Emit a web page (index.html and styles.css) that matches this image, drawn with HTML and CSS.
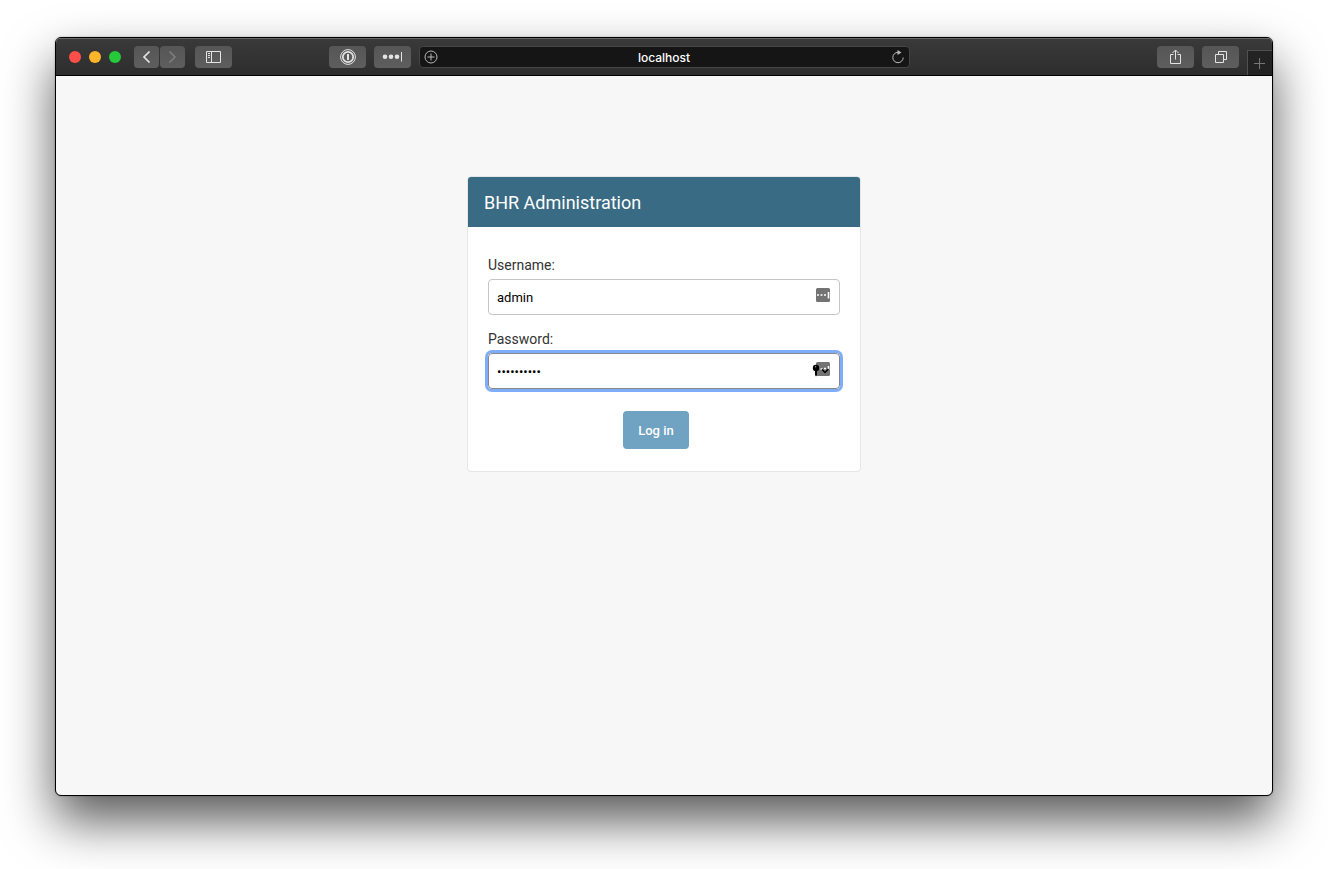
FILE: index.html
```
<!DOCTYPE html>
<html lang="en">
<head>
    <meta charset="UTF-8">
    <meta name="viewport" content="width=device-width, initial-scale=1.0">
    <title>Log in | BHR Administration</title>
    <link rel="stylesheet" href="styles.css">
</head>
<body>
    <div class="window">
        <header class="toolbar">
            <div class="toolbar-left">
                <div class="lights">
                    <button type="button" class="light close" aria-label="Close"></button>
                    <button type="button" class="light minimize" aria-label="Minimize"></button>
                    <button type="button" class="light zoom" aria-label="Zoom"></button>
                </div>
                <div class="history">
                    <button type="button" class="tool small" aria-label="Back">
                        <svg width="25" height="22" viewBox="0 0 25 22"><path d="M15.5 5.5 10 11l5.5 5.5" stroke-width="1.7"/></svg>
                    </button>
                    <button type="button" class="tool small" aria-label="Forward" disabled>
                        <svg width="25" height="22" viewBox="0 0 25 22"><path d="M9.5 5.5 15 11l-5.5 5.5" stroke-width="1.3"/></svg>
                    </button>
                </div>
                <button type="button" class="tool" aria-label="Show sidebar">
                    <svg width="37" height="22" viewBox="0 0 37 22"><path d="M11.5 5.5h14v11h-14zM16.5 5.5v11M13 7.5h2M13 9.5h2M13 11.5h2"/></svg>
                </button>
                <div class="extensions">
                    <button type="button" class="tool" aria-label="1Password">
                        <svg width="37" height="22" viewBox="0 0 37 22"><circle cx="19" cy="11" r="7.4"/><circle cx="19" cy="11" r="5.2" stroke-width="1.7"/><path d="M19 8v6" stroke-width="2"/></svg>
                    </button>
                    <button type="button" class="tool" aria-label="LastPass">
                        <svg width="37" height="22" viewBox="0 0 37 22"><g class="solid"><circle cx="11" cy="10.7" r="2.3"/><circle cx="17" cy="10.7" r="2.3"/><circle cx="23" cy="10.7" r="2.3"/></g><path d="M27.5 6v9.5"/></svg>
                    </button>
                </div>
            </div>
            <div class="address">
                <button type="button" class="address-button" aria-label="Add bookmark">
                    <svg width="14" height="14" viewBox="0 0 14 14"><circle cx="7" cy="7" r="6"/><path d="M7 3.5v7M3.5 7h7"/></svg>
                </button>
                <input type="text" class="address-input" value="localhost" aria-label="Address">
                <button type="button" class="address-button" aria-label="Reload">
                    <svg width="14" height="14" viewBox="0 0 14 14"><path d="M7 2.3A5.2 5.2 0 1 0 12.2 7.500"/><path class="solid" d="M6.5 0v5l4-2.5z"/></svg>
                </button>
            </div>
            <div class="toolbar-right">
                <button type="button" class="tool" aria-label="Share">
                    <svg width="37" height="22" viewBox="0 0 37 22"><path d="M16.5 8.5h-3v9h10v-9h-3M18.5 13.5v-9M15.5 7l3-3 3 3"/></svg>
                </button>
                <button type="button" class="tool" aria-label="Show tabs">
                    <svg width="37" height="22" viewBox="0 0 37 22"><path d="M13.5 8.5h8v8h-8zM16.5 8.5v-3h8v8h-3"/></svg>
                </button>
                <button type="button" class="new-tab" aria-label="New tab">
                    <svg width="24" height="24" viewBox="0 0 24 24"><path d="M11.5 7v11M6 12.5h11"/></svg>
                </button>
            </div>
        </header>
        <main class="page">
            <div class="login">
                <div class="login-header">
                    <h1>BHR Administration</h1>
                </div>
                <form class="login-form">
                    <div class="form-row">
                        <label for="id_username">Username:</label>
                        <div class="field">
                            <input type="text" name="username" id="id_username" value="admin">
                            <svg class="field-icon" width="18" height="14" viewBox="0 0 18 14"><rect x="4" width="14" height="14" rx="1.5" fill="#737373"/><path d="M5 7h2M8.500 7h2M12 7h2M16.500 4v6.500" stroke="#fff" stroke-width="1.6"/></svg>
                        </div>
                    </div>
                    <div class="form-row">
                        <label for="id_password">Password:</label>
                        <div class="field active">
                            <input type="password" name="password" id="id_password" value="adminadmin">
                            <svg class="field-icon" width="18" height="14" viewBox="0 0 18 14"><rect x="4" width="14" height="14" rx="1.5" fill="#737373"/><path d="M8.5 7h2M12 6.5h2M16.5 4v4" stroke="#fff" stroke-width="1.6"/><circle cx="4" cy="6" r="3.2"/><path d="M3 8h2v5l-1 1.500-1-1.500z"/><circle cx="3.600" cy="4.700" r=".7" fill="#999"/><path d="M10 7.500l3 3 3.500-3.500" fill="none" stroke="#000" stroke-width="1.5"/></svg>
                        </div>
                    </div>
                    <div class="submit-row">
                        <button type="submit">Log in</button>
                    </div>
                </form>
            </div>
        </main>
    </div>
</body>
</html>
```
FILE: styles.css
```
* {
    box-sizing: border-box;
}
body {
    margin: 0;
    padding: 37px 55px 73px;
    min-height: 100vh;
    display: flex;
    background: #fff;
    font-family: Roboto, "Liberation Sans", sans-serif;
    font-size: 14px;
    color: #333;
}
button,
input {
    font-family: inherit;
    margin: 0;
}
button {
    padding: 0;
    border: none;
}
svg {
    display: block;
}
.window {
    flex: 1;
    display: flex;
    flex-direction: column;
    border: 1px solid #000;
    border-radius: 6px;
    overflow: hidden;
    background: #f7f7f7;
    box-shadow: 0 25px 50px rgba(0, 0, 0, 0.65), 0 0 2px rgba(0, 0, 0, 0.3);
}

/* Browser toolbar */
.toolbar {
    display: flex;
    align-items: center;
    height: 38px;
    border-bottom: 1px solid #000;
    background: linear-gradient(#3a3a3a, #2d2d2d);
    box-shadow: inset 0 1px 0 #686868;
}
.toolbar svg {
    flex: none;
    fill: none;
    stroke: #e4e4e4;
}
.toolbar .solid {
    fill: #e4e4e4;
    stroke: none;
}
.toolbar-left,
.toolbar-right {
    flex: 1;
    display: flex;
    align-items: center;
}
.lights {
    display: flex;
    gap: 8px;
    margin: 0 13px;
}
.light {
    width: 12px;
    height: 12px;
    border-radius: 50%;
}
.close {
    background: #ff4f48;
}
.minimize {
    background: #fdb62a;
}
.zoom {
    background: #26c93a;
}
.history {
    display: flex;
    gap: 1px;
    margin-right: 10px;
}
.tool {
    display: flex;
    justify-content: center;
    width: 37px;
    height: 22px;
    border-radius: 4px;
    background: linear-gradient(#565656, #5e5e5e);
}
.tool.small {
    width: 25px;
}
.tool:disabled svg {
    stroke: #858585;
}
.extensions {
    display: flex;
    gap: 8px;
    margin-left: auto;
    margin-right: 8px;
}
.address {
    flex: 0 1 491px;
    display: flex;
    align-items: center;
    height: 22px;
    padding: 0 4px;
    border: 1px solid #454545;
    border-radius: 4px;
    background: #151515;
}
.address-input {
    flex: 1;
    min-width: 0;
    padding: 1px 0 0;
    border: none;
    background: none;
    color: #fff;
    font-family: Inter, sans-serif;
    font-size: 12px;
    font-weight: 500;
    text-align: center;
}
.address-button {
    background: none;
}
.address-button svg {
    stroke: #b8b8b8;
}
.address-button .solid {
    fill: #b8b8b8;
}
.toolbar-right {
    align-self: stretch;
    justify-content: flex-end;
    gap: 8px;
}
.new-tab {
    align-self: flex-end;
    width: 25px;
    height: 25px;
    border: 1px solid #505050;
    border-width: 1px 0 0 1px;
    background: #232323;
}
.new-tab svg {
    stroke: #777;
}

/* Login box */
.page {
    flex: 1;
    padding: 100px 20px;
}
.login {
    max-width: 394px;
    margin: 0 auto;
    border: 1px solid #e6e6e6;
    border-radius: 4px;
    overflow: hidden;
    background: #fff;
}
.login-header {
    padding: 16px 16px 14px;
    background: #396b84;
}
.login-header h1 {
    margin: 0;
    color: #fff;
    font-size: 18px;
    font-weight: 400;
    line-height: 20px;
}
.login-form {
    padding: 28px 20px 22px;
}
.form-row {
    margin-bottom: 14px;
}
.form-row label {
    display: block;
    margin-bottom: 4px;
    line-height: 20px;
}
.field {
    display: flex;
    align-items: center;
    height: 36px;
    padding: 0 9px 0 8px;
    border: 1px solid #c4c4c4;
    border-radius: 4px;
}
.field.active {
    border-color: #888;
    box-shadow: 0 0 0 3px #80adfa;
}
.field input {
    flex: 1;
    min-width: 0;
    padding: 0;
    border: none;
    outline: none;
    background: none;
    color: #000;
    font-size: 13px;
}
.field-icon {
    overflow: visible;
    margin-bottom: 4px;
}
.submit-row {
    padding: 8px 16px 0 0;
    text-align: center;
}
.submit-row button {
    padding: 11px 15px 9px;
    border-radius: 4px;
    background: #70a3c1;
    color: #fff;
    font-size: 13px;
    font-weight: 500;
    line-height: 18px;
    cursor: pointer;
}
```
